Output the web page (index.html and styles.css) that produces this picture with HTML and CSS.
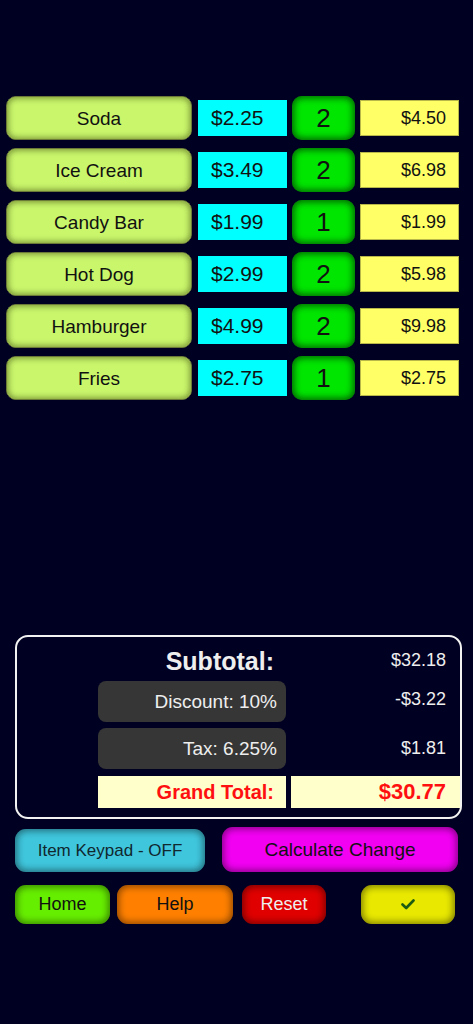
FILE: index.html
```html
<!DOCTYPE html>
<html lang="en">
<head>
  <meta charset="UTF-8">
  <meta name="viewport" content="width=device-width, initial-scale=1.0">
  <title>Register</title>
  <link rel="stylesheet" href="styles.css">
</head>
<body>
  <div class="items">
    <div class="row">
      <div class="item">Soda</div>
      <div class="price">$2.25</div>
      <div class="qty">2</div>
      <div class="total">$4.50</div>
    </div>
    <div class="row">
      <div class="item">Ice Cream</div>
      <div class="price">$3.49</div>
      <div class="qty">2</div>
      <div class="total">$6.98</div>
    </div>
    <div class="row">
      <div class="item">Candy Bar</div>
      <div class="price">$1.99</div>
      <div class="qty">1</div>
      <div class="total">$1.99</div>
    </div>
    <div class="row">
      <div class="item">Hot Dog</div>
      <div class="price">$2.99</div>
      <div class="qty">2</div>
      <div class="total">$5.98</div>
    </div>
    <div class="row">
      <div class="item">Hamburger</div>
      <div class="price">$4.99</div>
      <div class="qty">2</div>
      <div class="total">$9.98</div>
    </div>
    <div class="row">
      <div class="item">Fries</div>
      <div class="price">$2.75</div>
      <div class="qty">1</div>
      <div class="total">$2.75</div>
    </div>
  </div>

  <div class="summary">
    <div class="sum-row first">
      <div class="label subtotal">Subtotal:</div>
      <div class="value">$32.18</div>
    </div>
    <div class="sum-row">
      <div class="label dark">Discount: 10%</div>
      <div class="value up">-$3.22</div>
    </div>
    <div class="sum-row">
      <div class="label dark">Tax: 6.25%</div>
      <div class="value">$1.81</div>
    </div>
    <div class="sum-row grand">
      <div class="label cream">Grand Total:</div>
      <div class="value cream">$30.77</div>
    </div>
  </div>

  <div class="actions">
    <button class="btn keypad">Item Keypad - OFF</button>
    <button class="btn change">Calculate Change</button>
  </div>
  <div class="nav">
    <button class="btn home">Home</button>
    <button class="btn help">Help</button>
    <button class="btn reset">Reset</button>
    <button class="btn check">
      <svg width="14" height="11" viewBox="0 0 14 11"><path d="M1.5 5.5 L5.2 9 L12.5 1.5" fill="none" stroke="#1d5a12" stroke-width="2.6" stroke-linecap="round" stroke-linejoin="round"/></svg>
    </button>
  </div>
</body>
</html>
```

FILE: styles.css
```css
body {
  margin: 0;
  background: #000022;
  font-family: "Liberation Sans", Arial, sans-serif;
  width: 473px;
  height: 1024px;
  overflow: hidden;
}
.items {
  padding: 96px 0 0 6px;
}
.row {
  display: flex;
  align-items: center;
  height: 44px;
  margin-bottom: 8px;
}
.item {
  width: 186px;
  height: 44px;
  box-sizing: border-box;
  background: #c9f66b;
  border: 1px solid #6b7a36;
  border-radius: 10px;
  box-shadow: inset 0 0 6px 1px rgba(40, 50, 0, 0.55);
  display: flex;
  align-items: center;
  justify-content: center;
  padding-top: 2px;
  font-size: 19px;
  color: #111;
}
.price {
  width: 89px;
  height: 36px;
  margin-left: 6px;
  box-sizing: border-box;
  background: #00ffff;
  padding-left: 13px;
  display: flex;
  align-items: center;
  font-size: 21px;
  color: #111;
}
.qty {
  width: 63px;
  height: 44px;
  margin-left: 5px;
  box-sizing: border-box;
  background: #00e600;
  border-radius: 10px;
  box-shadow: inset 0 0 7px 2px rgba(0, 40, 0, 0.7);
  display: flex;
  align-items: center;
  justify-content: center;
  font-size: 26px;
  color: #111;
}
.total {
  width: 99px;
  height: 36px;
  margin-left: 5px;
  box-sizing: border-box;
  background: #ffff66;
  border: 1px solid #b8b84a;
  padding-right: 12px;
  display: flex;
  align-items: center;
  justify-content: flex-end;
  font-size: 18px;
  color: #111;
}

.summary {
  margin: 235px 0 0 15px;
  width: 447px;
  height: 184px;
  box-sizing: border-box;
  border: 2px solid #f2f2f2;
  border-radius: 13px;
  padding: 2px 0 0 81px;
}
.sum-row {
  display: flex;
  height: 41px;
  margin-bottom: 6px;
}
.sum-row.first {
  height: 42px;
  margin-bottom: 0;
}
.sum-row.grand {
  height: 32px;
  margin-top: 7px;
}
.label {
  width: 188px;
  box-sizing: border-box;
  padding-right: 9px;
  display: flex;
  align-items: center;
  justify-content: flex-end;
  color: #eee;
  font-size: 19px;
}
.label.subtotal {
  font-size: 25px;
  font-weight: bold;
  padding-right: 12px;
  align-items: flex-end;
  padding-bottom: 5px;
}
.label.dark {
  background: #363636;
  border-radius: 8px;
}
.value {
  width: 169px;
  margin-left: 5px;
  box-sizing: border-box;
  padding-right: 14px;
  display: flex;
  align-items: center;
  justify-content: flex-end;
  color: #eee;
  font-size: 18px;
}
.sum-row.first .value {
  align-items: flex-start;
  padding-top: 11px;
}
.value.up {
  align-items: flex-start;
  padding-top: 8px;
}
.cream {
  background: #ffffcc;
  color: #ff1010;
  font-weight: bold;
  font-size: 20px;
}
.label.cream {
  padding-right: 12px;
}
.value.cream {
  font-size: 22px;
}

.btn {
  font-family: "Liberation Sans", Arial, sans-serif;
  border: none;
  border-radius: 11px;
  color: #111;
  padding: 0;
  display: flex;
  align-items: center;
  justify-content: center;
  box-shadow: inset 0 0 7px 2px rgba(0, 0, 0, 0.45);
}
.actions {
  display: flex;
  align-items: flex-end;
  padding-left: 15px;
  margin-top: 8px;
}
.keypad {
  width: 190px;
  height: 43px;
  background: #3fc6dd;
  font-size: 17px;
  color: #10282e;
}
.change {
  width: 236px;
  height: 45px;
  margin-left: 17px;
  background: #f200f2;
  font-size: 19px;
}
.nav {
  display: flex;
  padding-left: 15px;
  margin-top: 13px;
}
.nav .btn {
  height: 39px;
  font-size: 18px;
}
.home {
  width: 95px;
  background: #66ee00;
}
.help {
  width: 116px;
  margin-left: 7px;
  background: #ff8000;
}
.reset {
  width: 84px;
  margin-left: 9px;
  background: #e00000;
  color: #eee !important;
}
.check {
  width: 94px;
  margin-left: 35px;
  background: #e8e800;
}
```
